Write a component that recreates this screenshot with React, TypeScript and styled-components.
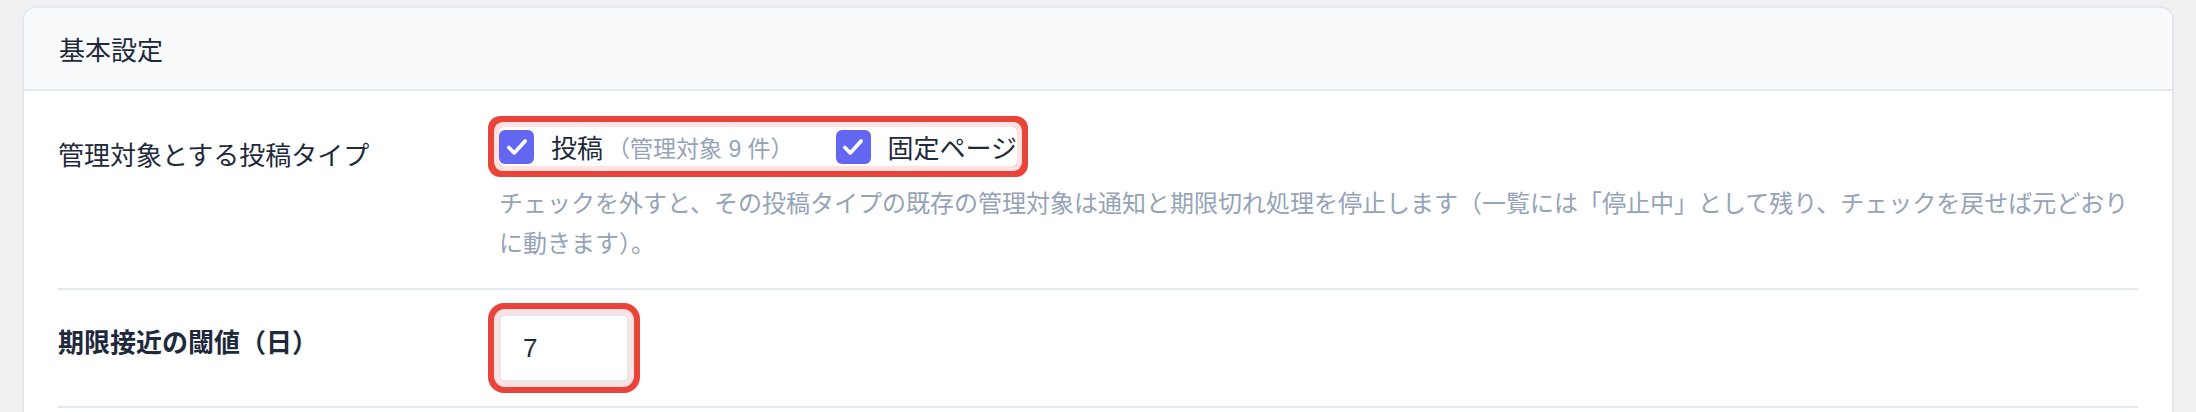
import { createGlobalStyle, styled } from 'styled-components'

const COLORS = {
  page: '#f0f0f1',
  line: '#e2e8f0',
  headBg: '#f8fafc',
  text: '#1e293b',
  muted: '#94a3b8',
  accent: '#6366f1',
  ring: '#fee2e2',
  mark: '#e9443a',
}

const FONT = `"Liberation Sans", "Noto Sans CJK JP", sans-serif`

const GlobalStyle = createGlobalStyle`
  html, body {
    margin: 0;
    background: ${COLORS.page};
    font-family: ${FONT};
    color: ${COLORS.text};
  }
  * {
    box-sizing: border-box;
  }
`

const postTypes = [
  { name: '投稿', note: '（管理対象 9 件）', checked: true },
  { name: '固定ページ', note: '', checked: true },
]

const CheckMark = () => (
  <svg width="26" height="26" viewBox="0 0 24 24" fill="none">
    <path
      d="M4.5 12.5 L9.5 17.5 L19.5 6.5"
      stroke="#fff"
      strokeWidth="3.4"
      strokeLinecap="round"
      strokeLinejoin="round"
    />
  </svg>
)

const App = () => {
  return (
    <>
      <GlobalStyle />
      <Card>
        <CardHeader>基本設定</CardHeader>
        <CardBody>
          <Row>
            <Label>管理対象とする投稿タイプ</Label>
            <Field>
              <CheckGroup>
                {postTypes.map((type) => (
                  <CheckItem key={type.name}>
                    <Box $checked={type.checked}>{type.checked && <CheckMark />}</Box>
                    <ItemName>{type.name}</ItemName>
                    {type.note && <Note>{type.note}</Note>}
                  </CheckItem>
                ))}
              </CheckGroup>
              <Help>
                チェックを外すと、その投稿タイプの既存の管理対象は通知と期限切れ処理を停止します（一覧には「停止中」として残り、チェックを戻せば元どおりに動きます）。
              </Help>
            </Field>
          </Row>
          <Row>
            <Label $strong>期限接近の閾値（日）</Label>
            <Field>
              <NumberInput type="number" defaultValue={7} />
            </Field>
          </Row>
        </CardBody>
      </Card>
    </>
  )
}

const Card = styled.section`
  margin: 6px 22px 0;
  background: #fff;
  border: 2px solid ${COLORS.line};
  border-radius: 14px;
  overflow: hidden;
  min-height: 420px;
`
const CardHeader = styled.header`
  display: flex;
  align-items: center;
  height: 83px;
  padding: 0 35px;
  background: ${COLORS.headBg};
  border-bottom: 2px solid ${COLORS.line};
  font-size: 26px;
  color: ${COLORS.text};
`
const CardBody = styled.div`
  padding: 12px 34px 0;
`
const Row = styled.div`
  display: grid;
  grid-template-columns: 441px 1fr;
  align-items: start;
  padding: 24px 0;
  border-bottom: 2px solid ${COLORS.line};
`
const Label = styled.div<{ $strong?: boolean }>`
  margin-top: 12px;
  font-size: 26px;
  line-height: 34px;
  font-weight: ${(p) => (p.$strong ? 700 : 400)};
  color: ${COLORS.text};
`
const Field = styled.div`
  display: flex;
  flex-direction: column;
  align-items: flex-start;
  min-width: 0;
`
const CheckGroup = styled.div`
  display: inline-flex;
  align-items: center;
  gap: 42px;
  height: 39px;
  border-radius: 4px;
  box-shadow: 0 0 0 5px ${COLORS.ring}, 0 0 0 11px ${COLORS.mark};
`
const CheckItem = styled.label`
  display: inline-flex;
  align-items: center;
  font-size: 26px;
  color: ${COLORS.text};
  white-space: nowrap;
`
const Box = styled.span<{ $checked: boolean }>`
  flex-shrink: 0;
  display: inline-flex;
  align-items: center;
  justify-content: center;
  width: 35px;
  height: 34px;
  border-radius: 6px;
  background: ${(p) => (p.$checked ? COLORS.accent : '#fff')};
  border: ${(p) => (p.$checked ? 'none' : `2px solid ${COLORS.line}`)};
`
const ItemName = styled.span`
  margin-left: 17px;
`
const Note = styled.span`
  margin-left: 4px;
  font-size: 23px;
  color: ${COLORS.muted};
`
const Help = styled.p`
  margin: 18px 0 0;
  font-size: 24px;
  line-height: 40px;
  color: ${COLORS.muted};
`
const NumberInput = styled.input`
  width: 130px;
  height: 68px;
  padding: 0 22px;
  border: 2px solid ${COLORS.line};
  border-radius: 6px;
  font-family: ${FONT};
  font-size: 26px;
  color: ${COLORS.text};
  background: #fff;
  outline: none;
  box-shadow: 0 0 0 5px ${COLORS.ring}, 0 0 0 11px ${COLORS.mark};
  -moz-appearance: textfield;

  &::-webkit-outer-spin-button,
  &::-webkit-inner-spin-button {
    -webkit-appearance: none;
    margin: 0;
  }
`

export default App
